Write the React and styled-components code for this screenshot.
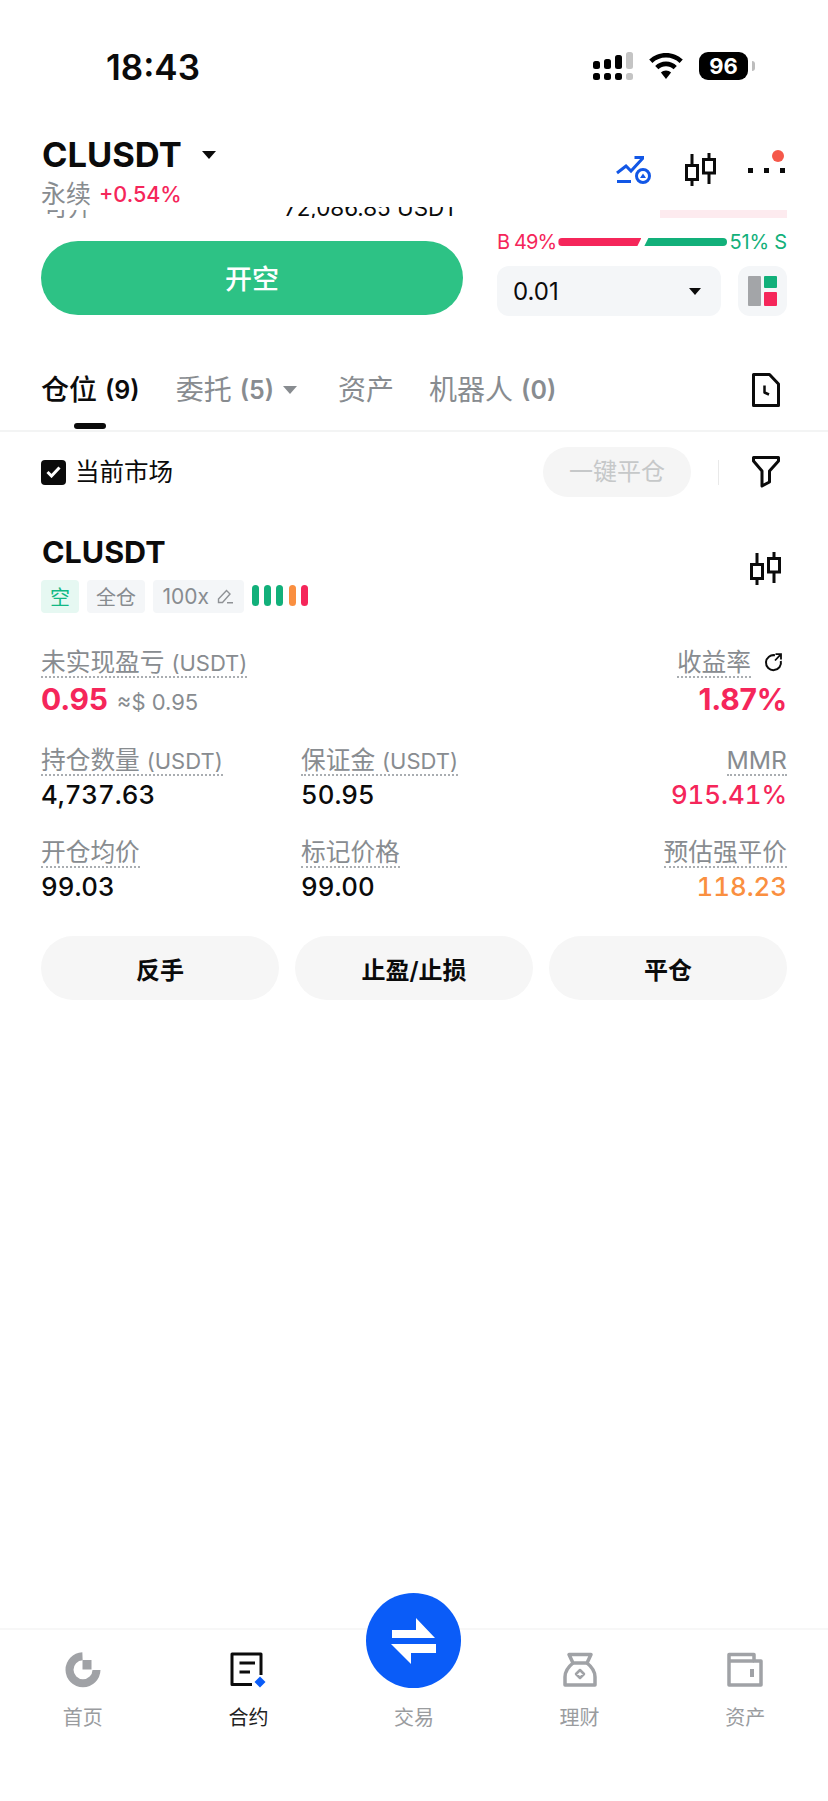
import React from "react";
import styled, { createGlobalStyle } from "styled-components";

const Global = createGlobalStyle`
  html, body { margin: 0; padding: 0; background: #fff; }
  body { font-family: Inter, "Noto Sans CJK SC", sans-serif; color: #0b0b0b; }
  * { box-sizing: border-box; }
`;

const RED = "#f5265a";
const GREEN = "#12b07a";
const GREY = "#888c90";

const Page = styled.div`
  width: 828px;
  height: 1801px;
  display: flex;
  flex-direction: column;
  overflow: hidden;
  background: #fff;
`;

const StatusBar = styled.div`
  height: 100px;
  padding: 49px 80px 0 106px;
  display: flex;
  align-items: flex-start;
  justify-content: space-between;
`;
const Clock = styled.div`
  font-size: 35px;
  line-height: 36px;
  font-weight: 600;
`;
const StatusIcons = styled.div`
  display: flex;
  align-items: center;
  gap: 16px;
  margin-top: 3px;
`;
const Battery = styled.div`
  position: relative;
  width: 49px;
  height: 28px;
  border-radius: 9px;
  background: #000;
  color: #fff;
  font-size: 22px;
  line-height: 28px;
  font-weight: 700;
  text-align: center;
  &::after {
    content: "";
    position: absolute;
    right: -7px;
    top: 9px;
    width: 3px;
    height: 10px;
    border-radius: 0 3px 3px 0;
    background: #bdbdbd;
  }
`;

const Header = styled.div`
  height: 106px;
  padding: 35px 43px 0 41px;
  display: flex;
  justify-content: space-between;
  align-items: flex-start;
`;
const TitleRow = styled.div`
  display: flex;
  align-items: center;
  gap: 20px;
`;
const Title = styled.div`
  font-size: 34.5px;
  line-height: 40px;
  font-weight: 700;
  margin-left: 1px;
`;
const Caret = styled.span`
  display: inline-block;
  width: 0;
  height: 0;
  border-left: ${(p) => p.$size}px solid transparent;
  border-right: ${(p) => p.$size}px solid transparent;
  border-top: ${(p) => p.$size * 1.25}px solid ${(p) => p.$color || "#0b0b0b"};
`;
const SubRow = styled.div`
  display: flex;
  align-items: center;
  gap: 8px;
  margin-top: 6px;
  height: 26px;
`;
const SubLabel = styled.span`
  font-size: 25px;
  color: ${GREY};
  line-height: 26px;
`;
const Change = styled.span`
  font-size: 21.5px;
  color: ${RED};
  line-height: 26px;
  font-weight: 500;
`;
const HeaderIcons = styled.div`
  display: flex;
  align-items: flex-start;
  margin-top: 18px;
  gap: 32px;
`;
const SwapBox = styled.div`
  margin-top: 2px;
  display: flex;
`;
const MoreWrap = styled.div`
  position: relative;
  width: 37px;
  height: 34px;
  display: flex;
  align-items: center;
  justify-content: space-between;
`;
const MoreDot = styled.span`
  width: 5px;
  height: 5px;
  background: #0b0b0b;
`;
const Notice = styled.span`
  position: absolute;
  right: 1px;
  top: -3px;
  width: 12px;
  height: 12px;
  border-radius: 50%;
  background: #f5584a;
`;

const ClipStrip = styled.div`
  height: 12px;
  padding: 0 41px;
  display: grid;
  grid-template-columns: 422px 1fr;
  column-gap: 34px;
  overflow: hidden;
`;
const ClipLeft = styled.div`
  display: flex;
  justify-content: space-between;
  align-items: flex-end;
  padding: 0 5px 0 3px;
`;
const ClipMask = styled.div`
  height: ${(p) => p.$height}px;
  overflow: hidden;
  display: flex;
  align-items: flex-end;
`;
const ClipText = styled.span`
  font-size: ${(p) => p.$size}px;
  line-height: 16px;
  height: 16px;
  color: ${(p) => p.$color};
  flex: none;
  margin-bottom: 2px;
`;
const PinkBar = styled.div`
  margin-top: 4px;
  height: 8px;
  margin-left: 163px;
  background: #fdebef;
`;

const TradePanel = styled.div`
  padding: 0 41px;
  display: grid;
  grid-template-columns: 422px 290px;
  column-gap: 34px;
`;
const OpenButton = styled.button`
  margin-top: 23px;
  height: 74px;
  border: 0;
  border-radius: 37px;
  background: #2dc285;
  color: #fff;
  padding: 0 0 2px;
  font: 500 27px Inter, "Noto Sans CJK SC", sans-serif;
`;
const RatioColumn = styled.div`
  padding-top: 12px;
`;
const RatioRow = styled.div`
  height: 24px;
  display: flex;
  align-items: center;
  justify-content: space-between;
  font-size: 20px;
  white-space: nowrap;
`;
const RatioText = styled.span`
  color: ${(p) => p.$color};
  letter-spacing: ${(p) => p.$spacing}px;
`;
const RatioBars = styled.div`
  display: flex;
  gap: 3px;
  width: 169px;
`;
const BuyBar = styled.div`
  flex: 1;
  height: 8px;
  background: ${RED};
  border-radius: 4px 0 0 4px;
  clip-path: polygon(0 0, 100% 0, calc(100% - 4px) 100%, 0 100%);
`;
const SellBar = styled.div`
  flex: 1;
  height: 8px;
  background: ${GREEN};
  border-radius: 0 4px 4px 0;
  clip-path: polygon(4px 0, 100% 0, 100% 100%, 0 100%);
`;
const SelectRow = styled.div`
  margin-top: 12px;
  display: flex;
  justify-content: space-between;
`;
const SizeSelect = styled.div`
  width: 224px;
  height: 50px;
  border-radius: 12px;
  background: #f4f6f8;
  padding: 0 20px 0 16px;
  display: flex;
  align-items: center;
  justify-content: space-between;
  font-size: 24px;
`;
const LayoutButton = styled.div`
  width: 49px;
  height: 50px;
  border-radius: 12px;
  background: #f4f6f8;
  display: flex;
  align-items: center;
  justify-content: center;
`;

const Tabs = styled.div`
  height: 116px;
  padding: 57px 41px 0;
  border-bottom: 2px solid #f3f4f4;
  display: flex;
  align-items: flex-start;
`;
const Tab = styled.div`
  position: relative;
  margin-left: ${(p) => p.$gap || 0}px;
  height: 34px;
  display: flex;
  align-items: center;
  font-size: 28px;
  line-height: 34px;
  font-weight: ${(p) => (p.$active ? 500 : 400)};
  color: ${(p) => (p.$active ? "#0b0b0b" : GREY)};
  white-space: nowrap;
`;
const TabCount = styled.span`
  margin-left: 8px;
  font-size: 25px;
  font-weight: 600;
`;
const TabCaretBox = styled.span`
  margin-left: 9px;
  display: inline-flex;
`;
const Underline = styled.span`
  position: absolute;
  left: 33px;
  top: 50px;
  width: 32px;
  height: 6px;
  border-radius: 3px;
  background: #0b0b0b;
`;
const TabIcon = styled.div`
  margin-left: auto;
  margin-right: 7px;
  display: flex;
`;

const FilterRow = styled.div`
  margin-top: 15px;
  height: 50px;
  padding: 0 48px 0 41px;
  display: flex;
  align-items: center;
`;
const Check = styled.span`
  width: 25px;
  height: 25px;
  border-radius: 4px;
  background: #0b0b0b;
  display: flex;
  align-items: center;
  justify-content: center;
`;
const CheckLabel = styled.span`
  margin-left: 9px;
  font-size: 24.5px;
  line-height: 30px;
  padding-bottom: 1px;
  flex: 1;
`;
const CloseAll = styled.div`
  width: 148px;
  height: 50px;
  border-radius: 25px;
  background: #f5f5f5;
  color: #c6c8c9;
  font-size: 24px;
  line-height: 50px;
  text-align: center;
`;
const VDivider = styled.span`
  width: 1px;
  height: 25px;
  margin: 0 33px 0 27px;
  background: #e9e9e9;
`;

const Card = styled.div`
  padding: 37px 41px 0;
`;
const CardHead = styled.div`
  display: flex;
  justify-content: space-between;
  align-items: flex-start;
`;
const CardTitle = styled.div`
  font-size: 30.5px;
  line-height: 36px;
  font-weight: 700;
  margin-left: 1px;
`;
const CandleBox = styled.div`
  margin-top: 18px;
  margin-right: 6px;
  height: 34px;
`;
const Badges = styled.div`
  margin-top: -6px;
  display: flex;
  align-items: center;
  gap: 8px;
`;
const Badge = styled.span`
  height: 33px;
  padding: 0 ${(p) => p.$pad || 9}px;
  border-radius: 4px;
  display: inline-flex;
  align-items: center;
  gap: ${(p) => p.$gap || 7}px;
  font-size: ${(p) => p.$size || 20}px;
  background: ${(p) => p.$bg};
  color: ${(p) => p.$color};
`;
const Risk = styled.div`
  display: flex;
  gap: 5.4px;
  margin-top: -2px;
`;
const RiskBar = styled.span`
  width: 7px;
  height: 21px;
  border-radius: 3.5px;
  background: ${(p) => p.$color};
`;

const Stats = styled.div`
  margin-top: 35px;
  display: grid;
  grid-template-columns: 260px 1fr auto;
  row-gap: 28px;
`;
const Stat = styled.div`
  display: flex;
  flex-direction: column;
  align-items: ${(p) => (p.$right ? "flex-end" : "flex-start")};
`;
const LabelLine = styled.div`
  display: flex;
  align-items: flex-start;
  gap: 13px;
`;
const Label = styled.span`
  font-size: 24.7px;
  line-height: 28px;
  height: 30px;
  color: ${GREY};
  border-bottom: 2px dotted #a9adb1;
  white-space: nowrap;
`;
const LabelSuffix = styled.span`
  font-size: 22px;
`;
const RefreshBox = styled.span`
  display: flex;
  margin: 5px 4px 0 0;
`;
const Value = styled.div`
  margin-top: 4px;
  font-size: 25.8px;
  line-height: 30px;
  font-weight: 500;
  font-variant-numeric: tabular-nums;
  color: ${(p) => p.$color || "#0b0b0b"};
`;
const BigValue = styled.div`
  margin: 3px 0 -2px;
  font-size: 30px;
  line-height: 36px;
  font-weight: 700;
  letter-spacing: -0.2px;
  color: ${RED};
  display: flex;
  align-items: baseline;
  gap: 9px;
`;
const Approx = styled.span`
  font-size: 22px;
  font-weight: 400;
  letter-spacing: 0;
  color: ${GREY};
`;
const Actions = styled.div`
  margin-top: 34px;
  display: grid;
  grid-template-columns: repeat(3, 238px);
  column-gap: 16px;
`;
const Action = styled.button`
  height: 64px;
  border: 0;
  border-radius: 32px;
  background: #f6f6f6;
  color: #0b0b0b;
  font: 600 24px Inter, "Noto Sans CJK SC", sans-serif;
`;

const Spacer = styled.div`
  flex: 1;
`;
const Nav = styled.div`
  position: relative;
  height: 173px;
  border-top: 2px solid #f7f7f7;
  display: grid;
  grid-template-columns: repeat(5, 1fr);
`;
const NavItem = styled.div`
  padding-top: 22px;
  display: flex;
  flex-direction: column;
  align-items: center;
`;
const NavIcon = styled.div`
  height: 36px;
  display: flex;
  align-items: center;
  justify-content: center;
`;
const NavLabel = styled.div`
  margin-top: 17px;
  font-size: 20px;
  line-height: 26px;
  color: ${(p) => (p.$active ? "#222" : "#9a9c9f")};
`;
const TradeFab = styled.div`
  position: absolute;
  left: 366px;
  top: -37px;
  width: 95px;
  height: 95px;
  border-radius: 50%;
  background: #0a5cf8;
  display: flex;
  align-items: center;
  justify-content: center;
`;

const Candle = () => (
  <svg width="32" height="34" viewBox="0 0 32 34" fill="none" stroke="#0b0b0b" strokeWidth="3">
    <rect x="2.5" y="12.5" width="11" height="14" />
    <path d="M8 1v11.5M8 26.5V33M25 0v6.5M25 20v11" />
    <rect x="19.5" y="6.5" width="11" height="13.5" />
  </svg>
);

const Signal = () => (
  <svg width="40" height="28" viewBox="0 0 40 28">
    <g fill="#000">
      <rect x="0" y="9" width="7" height="8" rx="2.5" />
      <rect x="0" y="21" width="7" height="7" rx="2.5" />
      <rect x="11" y="7" width="7" height="10" rx="2.5" />
      <rect x="11" y="21" width="7" height="7" rx="2.5" />
      <rect x="22" y="3" width="7" height="14" rx="2.5" />
      <rect x="22" y="21" width="7" height="7" rx="2.5" />
    </g>
    <g fill="#c4c4c4">
      <rect x="33" y="0" width="7" height="17" rx="2.5" />
      <rect x="33" y="21" width="7" height="7" rx="2.5" />
    </g>
  </svg>
);

const Wifi = () => (
  <svg width="34" height="26" viewBox="0 0 34 26">
    <path d="M17 0C10.5 0 4.6 2.5 0.2 6.6l3.2 3.4C7 6.6 11.8 4.6 17 4.6s10 2 13.6 5.4l3.2-3.4C29.4 2.5 23.5 0 17 0z" />
    <path d="M17 8.6c-4.2 0-8 1.6-10.8 4.3l3.2 3.4c2-1.9 4.7-3 7.6-3s5.6 1.100 7.600 3l3.200-3.400C25 10.200 21.200 8.600 17 8.600z" />
    <path d="M17 17.400c-2 0-3.800 .8-5.100 2L17 26l5.100-6.600c-1.300-1.200-3.100-2-5.100-2z" />
  </svg>
);

const SwapPlan = () => (
  <svg width="36" height="30" viewBox="0 0 36 30" fill="none" stroke="#1257e6" strokeWidth="3">
    <path d="M1 18l9-7 5 5L27 3M18.500 2.500H28" />
    <path d="M1 26.500h14" />
    <circle cx="27" cy="21" r="6.500" />
    <path d="M24 23h6l-3-4.500z" fill="#1257e6" stroke="none" />
  </svg>
);

const DocClock = () => (
  <svg width="28" height="34" viewBox="0 0 28 34" fill="none" stroke="#0b0b0b" strokeWidth="3" strokeLinejoin="round">
    <path d="M1.500 1.500H17.500L26.500 11V32.500H1.500Z" />
    <path d="M12.500 12.500V19.500L17 21.500" strokeWidth="2.500" />
  </svg>
);

const Funnel = () => (
  <svg width="28" height="32" viewBox="0 0 28 32" fill="none" stroke="#0b0b0b" strokeWidth="3" strokeLinejoin="round">
    <path d="M1.500 1.500H26.500V5L17.500 15V26L10 30V15L1.500 5Z" />
  </svg>
);

const LayoutIcon = () => (
  <svg width="29" height="30" viewBox="0 0 29 30">
    <rect width="13" height="30" rx="1" fill="#a3a5a8" />
    <rect x="16" width="13" height="12" rx="1" fill="#12b07a" />
    <rect x="16" y="16" width="13" height="14" rx="1" fill="#f5265a" />
  </svg>
);

const Tick = () => (
  <svg width="15" height="12" viewBox="0 0 15 12" fill="none" stroke="#fff" strokeWidth="3">
    <path d="M1.500 6l4 4 8-8.500" />
  </svg>
);

const Pencil = () => (
  <svg width="17" height="15" viewBox="0 0 17 15" fill="none" stroke="#8f9296" strokeWidth="1.400">
    <path d="M1.500 10L9.500 1.500l3.500 3.500L5.500 13.500H1.500zM10 13.800h6" />
  </svg>
);

const Refresh = () => (
  <svg width="19" height="19" viewBox="0 0 19 19" fill="none" stroke="#0b0b0b" strokeWidth="2">
    <path d="M11 2.300A7.500 7.500 0 1 0 16.800 8" />
    <path d="M11.500 1.200H17V6.500M17 1.200L11 7.500" strokeWidth="1.800" />
  </svg>
);

const HomeIcon = () => (
  <svg width="36" height="36" viewBox="0 0 36 36" fill="none">
    <path d="M17.500 4.200A13.500 13.500 0 1 0 31.500 18" stroke="#a0a2a6" strokeWidth="8" />
    <rect x="17.500" y="8" width="9" height="9.500" fill="#a0a2a6" />
  </svg>
);

const ContractIcon = () => (
  <svg width="36" height="36" viewBox="0 0 36 36" fill="none">
    <path d="M22 32.500H2V2H31V23" stroke="#0b0b0b" strokeWidth="3" strokeLinejoin="round" />
    <path d="M9.500 11H25M9.500 20H20" stroke="#0b0b0b" strokeWidth="3" />
    <path d="M30 24.500L35.500 30L30 35.500L24.500 30Z" fill="#0a5cf8" />
  </svg>
);

const WealthIcon = () => (
  <svg width="34" height="36" viewBox="0 0 34 36" fill="none" stroke="#a0a2a6" strokeWidth="3.500" strokeLinejoin="round">
    <path d="M6 2.500H28L24 11H10Z" />
    <path d="M10 11C5 15 2 20 2 25V33H32V25C32 20 29 15 24 11" />
    <path d="M17 18L21 22L17 26L13 22Z" strokeWidth="2.500" />
  </svg>
);

const AssetIcon = () => (
  <svg width="36" height="36" viewBox="0 0 36 36" fill="none" stroke="#a0a2a6" strokeWidth="3.500" strokeLinejoin="round">
    <path d="M2 2.500H27V9H34V33H2Z" />
    <path d="M2 9H27" />
    <path d="M25 17V25" strokeWidth="4" />
  </svg>
);

const SwapArrows = () => (
  <svg width="46" height="48" viewBox="0 0 46 48" fill="#fff">
    <path d="M1 13H25V1L44 21H1Z" />
    <path d="M45 27V36H20V47L0 27Z" />
  </svg>
);

const navItems = [
  { label: "首页", icon: <HomeIcon /> },
  { label: "合约", icon: <ContractIcon />, active: true },
  { label: "交易", icon: null },
  { label: "理财", icon: <WealthIcon /> },
  { label: "资产", icon: <AssetIcon /> },
];

const riskColors = [GREEN, GREEN, GREEN, "#fa8f40", RED];

export default function App() {
  return (
    <Page>
      <Global />
      <StatusBar>
        <Clock>18:43</Clock>
        <StatusIcons>
          <Signal />
          <Wifi />
          <Battery>96</Battery>
        </StatusIcons>
      </StatusBar>

      <Header>
        <div>
          <TitleRow>
            <Title>CLUSDT</Title>
            <Caret $size={7} />
          </TitleRow>
          <SubRow>
            <SubLabel>永续</SubLabel>
            <Change>+0.54%</Change>
          </SubRow>
        </div>
        <HeaderIcons>
          <SwapBox>
            <SwapPlan />
          </SwapBox>
          <Candle />
          <MoreWrap>
            <MoreDot />
            <MoreDot />
            <MoreDot />
            <Notice />
          </MoreWrap>
        </HeaderIcons>
      </Header>

      <ClipStrip>
        <ClipLeft>
          <ClipMask $height={8}>
            <ClipText $size={24} $color={GREY}>可开</ClipText>
          </ClipMask>
          <ClipMask $height={11}>
            <ClipText $size={22.4} $color="#0b0b0b">72,086.85 USDT</ClipText>
          </ClipMask>
        </ClipLeft>
        <PinkBar />
      </ClipStrip>

      <TradePanel>
        <OpenButton>开空</OpenButton>
        <RatioColumn>
          <RatioRow>
            <RatioText $color={RED} $spacing={-0.9}>B 49%</RatioText>
            <RatioBars>
              <BuyBar />
              <SellBar />
            </RatioBars>
            <RatioText $color={GREEN} $spacing={-0.2}>51% S</RatioText>
          </RatioRow>
          <SelectRow>
            <SizeSelect>
              0.01
              <Caret $size={6} />
            </SizeSelect>
            <LayoutButton>
              <LayoutIcon />
            </LayoutButton>
          </SelectRow>
        </RatioColumn>
      </TradePanel>

      <Tabs>
        <Tab $active>
          仓位<TabCount>(9)</TabCount>
          <Underline />
        </Tab>
        <Tab $gap={36}>
          委托<TabCount>(5)</TabCount>
          <TabCaretBox>
            <Caret $size={7} $color={GREY} />
          </TabCaretBox>
        </Tab>
        <Tab $gap={41}>资产</Tab>
        <Tab $gap={35}>
          机器人<TabCount>(0)</TabCount>
        </Tab>
        <TabIcon>
          <DocClock />
        </TabIcon>
      </Tabs>

      <FilterRow>
        <Check>
          <Tick />
        </Check>
        <CheckLabel>当前市场</CheckLabel>
        <CloseAll>一键平仓</CloseAll>
        <VDivider />
        <Funnel />
      </FilterRow>

      <Card>
        <CardHead>
          <CardTitle>CLUSDT</CardTitle>
          <CandleBox>
            <Candle />
          </CandleBox>
        </CardHead>
        <Badges>
          <Badge $bg="#e6f8f2" $color="#12b884">空</Badge>
          <Badge $bg="#f4f6f8" $color={GREY}>全仓</Badge>
          <Badge $bg="#f4f6f8" $color={GREY} $size={21} $pad={9.5} $gap={8}>
            100x
            <Pencil />
          </Badge>
          <Risk>
            {riskColors.map((c, i) => (
              <RiskBar key={i} $color={c} />
            ))}
          </Risk>
        </Badges>

        <Stats>
          <Stat>
            <Label>未实现盈亏 <LabelSuffix>(USDT)</LabelSuffix></Label>
            <BigValue>
              0.95<Approx>≈$ 0.95</Approx>
            </BigValue>
          </Stat>
          <div />
          <Stat $right>
            <LabelLine>
              <Label>收益率</Label>
              <RefreshBox>
                <Refresh />
              </RefreshBox>
            </LabelLine>
            <BigValue>1.87%</BigValue>
          </Stat>

          <Stat>
            <Label>持仓数量 <LabelSuffix>(USDT)</LabelSuffix></Label>
            <Value>4,737.63</Value>
          </Stat>
          <Stat>
            <Label>保证金 <LabelSuffix>(USDT)</LabelSuffix></Label>
            <Value>50.95</Value>
          </Stat>
          <Stat $right>
            <Label>MMR</Label>
            <Value $color={RED}>915.41%</Value>
          </Stat>

          <Stat>
            <Label>开仓均价</Label>
            <Value>99.03</Value>
          </Stat>
          <Stat>
            <Label>标记价格</Label>
            <Value>99.00</Value>
          </Stat>
          <Stat $right>
            <Label>预估强平价</Label>
            <Value $color="#fa8f40">118.23</Value>
          </Stat>
        </Stats>

        <Actions>
          <Action>反手</Action>
          <Action>止盈/止损</Action>
          <Action>平仓</Action>
        </Actions>
      </Card>

      <Spacer />

      <Nav>
        {navItems.map((n) => (
          <NavItem key={n.label}>
            <NavIcon>{n.icon}</NavIcon>
            <NavLabel $active={n.active}>{n.label}</NavLabel>
          </NavItem>
        ))}
        <TradeFab>
          <SwapArrows />
        </TradeFab>
      </Nav>
    </Page>
  );
}
